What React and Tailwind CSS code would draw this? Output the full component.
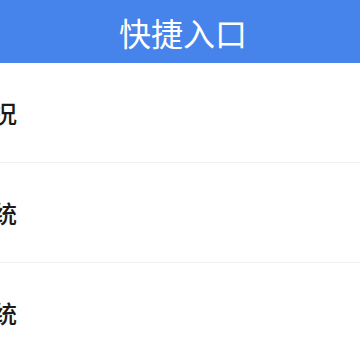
const rows = ["运行状况", "管理系统", "监控系统"];

export default function App() {
  return (
    <div
      className="w-[360px] h-[360px] overflow-hidden bg-white"
      style={{ fontFamily: '"Noto Sans CJK SC", "Noto Sans", sans-serif' }}
    >
      <div className="h-[63px] bg-[#4683ea] flex items-center justify-center">
        <span className="text-[32px] leading-none text-white pl-[6px]">快捷入口</span>
      </div>
      {rows.map((label, i) => (
        <div
          key={label}
          className={
            "h-[100px] flex items-center overflow-hidden" +
            (i < rows.length - 1 ? " border-b border-[#f2f2f2]" : "")
          }
        >
          <span className="ml-[-79px] text-[24px] leading-none font-medium text-[#1a1a1a] whitespace-nowrap">
            {label}
          </span>
        </div>
      ))}
    </div>
  );
}
